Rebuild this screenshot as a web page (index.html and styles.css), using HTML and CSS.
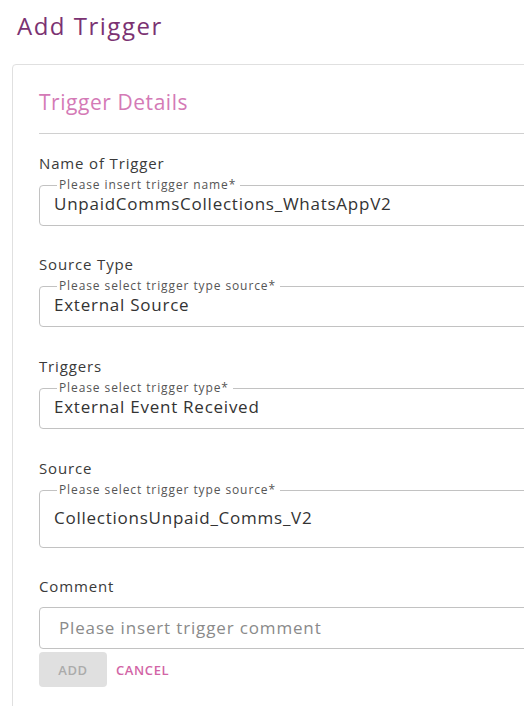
FILE: index.html
```html
<!DOCTYPE html>
<html lang="en">
<head>
<meta charset="utf-8">
<title>Add Trigger</title>
<link rel="stylesheet" href="styles.css">
</head>
<body>
<h1 class="page-title">Add Trigger</h1>
<section class="card">
  <h2 class="card-title">Trigger Details</h2>

  <div class="field">
    <div class="field-label">Name of Trigger</div>
    <fieldset class="outlined">
      <legend>Please insert trigger name*</legend>
      <div class="value">UnpaidCommsCollections_WhatsAppV2</div>
    </fieldset>
  </div>

  <div class="field">
    <div class="field-label">Source Type</div>
    <fieldset class="outlined">
      <legend>Please select trigger type source*</legend>
      <div class="value">External Source</div>
    </fieldset>
  </div>

  <div class="field field-gap">
    <div class="field-label">Triggers</div>
    <fieldset class="outlined">
      <legend>Please select trigger type*</legend>
      <div class="value">External Event Received</div>
    </fieldset>
  </div>

  <div class="field field-gap">
    <div class="field-label">Source</div>
    <fieldset class="outlined tall">
      <legend>Please select trigger type source*</legend>
      <div class="value">CollectionsUnpaid_Comms_V2</div>
    </fieldset>
  </div>

  <div class="field">
    <div class="field-label">Comment</div>
    <div class="text-input">Please insert trigger comment</div>
  </div>

  <div class="actions">
    <button class="btn btn-add" type="button">ADD</button>
    <button class="btn btn-cancel" type="button">CANCEL</button>
  </div>
</section>
</body>
</html>
```

FILE: styles.css
```css
html, body {
  overflow: hidden;
}
body {
  margin: 0;
  background: #ffffff;
  font-family: "Open Sans", "DejaVu Sans", sans-serif;
  color: #333333;
}
.page-title {
  margin: 10px 0 22px 17px;
  font-size: 24px;
  line-height: 32px;
  font-weight: 400;
  letter-spacing: 1.5px;
  color: #7b3272;
}
.card {
  margin-left: 12px;
  width: 620px;
  height: 660px;
  border: 1px solid #e0e0e0;
  border-radius: 4px;
  padding: 23px 26px 0 26px;
  box-sizing: border-box;
}
.card-title {
  margin: 0;
  font-size: 21px;
  line-height: 28px;
  font-weight: 400;
  letter-spacing: 0.55px;
  color: #d47ab6;
  padding-bottom: 17px;
  border-bottom: 1px solid #d0d0d0;
}
.field {
  margin-top: 28px;
}
.field-gap {
  margin-top: 29px;
}
.card-title + .field {
  margin-top: 19px;
}
.field-label {
  font-size: 15px;
  line-height: 20px;
  letter-spacing: 0.85px;
  color: #3a3a3a;
}
.outlined {
  margin: 5px 0 0 0;
  padding: 0 14px 9px 14px;
  border: 1px solid #c2c2c2;
  border-radius: 4px;
  min-width: 0;
}
.outlined legend {
  margin-left: 3px;
  padding: 0 4px 0 2px;
  font-size: 12px;
  line-height: 14px;
  letter-spacing: 0.9px;
  color: #555555;
}
.outlined .value {
  font-size: 17px;
  line-height: 24px;
  letter-spacing: 0.75px;
  color: #333333;
}
.outlined.tall {
  padding-top: 9px;
  padding-bottom: 17px;
}
.text-input {
  margin-top: 11px;
  height: 42px;
  box-sizing: border-box;
  border: 1px solid #c2c2c2;
  border-radius: 4px;
  padding: 0 19px;
  font-size: 17px;
  line-height: 40px;
  letter-spacing: 0.85px;
  color: #8a8a8a;
}
.actions {
  display: flex;
  align-items: center;
  gap: 9px;
  margin-top: 3px;
}
.btn {
  font-family: inherit;
  border: none;
  border-radius: 4px;
  font-size: 13px;
  font-weight: 600;
  letter-spacing: 0.6px;
  background: transparent;
  padding: 0;
  cursor: pointer;
}
.btn-add {
  width: 68px;
  height: 35px;
  background: #e0e0e0;
  color: #ababab;
}
.btn-cancel {
  color: #d265a6;
}
```
